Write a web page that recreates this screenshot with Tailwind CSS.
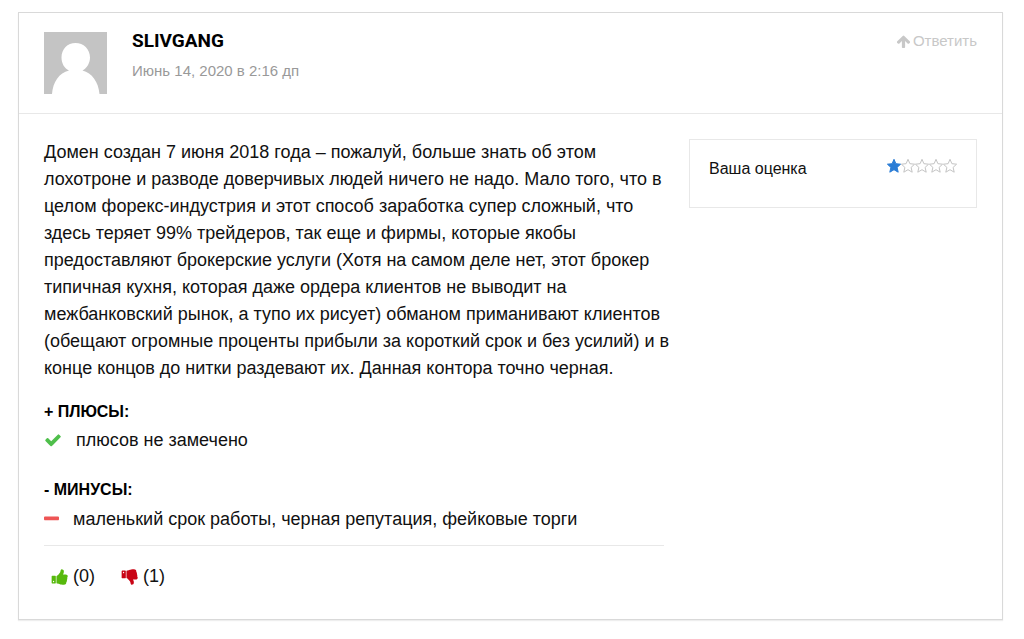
<!DOCTYPE html>
<html lang="ru">
<head>
<meta charset="utf-8">
<meta name="viewport" content="width=device-width, initial-scale=1">
<title>Отзыв SLIVGANG</title>
<script src="https://cdn.jsdelivr.net/npm/@tailwindcss/browser@4"></script>
</head>
<body class="bg-white pt-3 pr-[21px] pb-5 pl-[18px] font-['Liberation_Sans',sans-serif] text-lg leading-[27px] text-[#111]">
<svg class="hidden" aria-hidden="true">
  <symbol id="thumb" viewBox="0 0 1792 1792"><path d="M320 1344q0-26-19-45t-45-19q-27 0-45.5 19t-18.5 45q0 27 18.5 45.5t45.5 18.5q26 0 45-18.5t19-45.5zm160-512v640q0 26-19 45t-45 19h-288q-26 0-45-19t-19-45v-640q0-26 19-45t45-19h288q26 0 45 19t19 45zm1184 0q0 86-55 149 15 44 15 76 3 76-43 137 17 56 0 117-15 57-54 94 9 112-49 181-64 76-197 78h-129q-66 0-144-15.5t-121.5-29-120.5-39.5q-123-43-158-44-26-1-45-19.5t-19-44.5v-641q0-25 18-43.5t43-20.5q24-2 76-59t101-121q68-87 101-120 18-18 31-48t17.5-48.5 13.5-60.5q7-39 12.5-61t19.500-52 34-50q19-19 45-19 46 0 82.500 10.500t60 26 40 40.500 24 45 12 50 5 45 .5 39q0 38-9.500 76t-19 60-27.500 56q-3 6-10 18t-11 22-8 24h277q78 0 135 57t57 135z"/></symbol>
  <symbol id="star" viewBox="0 0 14 14" overflow="visible"><path d="M7 .3 8.900 4.700 13.600 5.200 10.100 8.400 11.200 13.200 7 10.700 2.800 13.200 3.900 8.400 .4 5.200 5.100 4.700Z"/></symbol>
</svg>
<article class="border border-[#d9d9d9] shadow-[0_1px_1px_#eee]">
  <header class="flex items-start border-b border-[#e8e8e8] px-[25px] pt-[19px] pb-[19px]">
    <svg class="h-[62px] w-[63px] shrink-0" viewBox="0 0 63 62" role="img" aria-label="Аватар">
      <rect width="63" height="62" fill="#c4c4c4"/>
      <path d="M8 62C9 50 15 41 25 38.500C20 36 17.500 31 17.500 25.500C17.500 17 23.500 11 31.500 11S46 17 46 25.500C46 31 43 36 38.500 38.500C48 41 54.500 50 55.500 62Z" fill="#fff"/>
    </svg>
    <div class="-mt-px ml-[25px] flex-1">
      <h3 class="font-['Roboto',sans-serif] text-[19px] leading-5 font-bold text-black">SLIVGANG</h3>
      <time class="mt-2 block text-[15px] leading-6 text-[#999]" datetime="2020-06-14T02:16">Июнь 14, 2020 в 2:16 дп</time>
    </div>
    <a href="#reply" class="flex items-center gap-[2px] text-[15px] leading-[18px] text-[#c8c8c8]">
      <svg class="size-[15px]" viewBox="0 0 1792 1792" fill="currentColor" aria-hidden="true"><path d="M1675 971q0 51-37 90l-75 75q-38 38-91 38-54 0-90-38l-294-293v704q0 52-37.500 84.500t-90.500 32.500h-128q-53 0-90.500-32.500t-37.500-84.500v-704l-294 293q-36 38-90 38t-90-38l-75-75q-38-38-38-90 0-53 38-91l651-651q35-37 90-37 54 0 91 37l651 651q37 39 37 91z"/></svg>Ответить</a>
  </header>
  <div class="flex items-start gap-[25px] px-[25px] pt-[25px] pb-[29px]">
    <div class="min-w-0 flex-1">
      <p class="-mr-3">Домен создан 7 июня 2018 года – пожалуй, больше знать об этом лохотроне и разводе доверчивых людей ничего не надо. Мало того, что в целом форекс-индустрия и этот способ заработка супер сложный, что здесь теряет 99% трейдеров, так еще и фирмы, которые якобы предоставляют брокерские услуги (Хотя на самом деле нет, этот брокер типичная кухня, которая даже ордера клиентов не выводит на межбанковский рынок, а тупо их рисует) обманом приманивают клиентов (обещают огромные проценты прибыли за короткий срок и без усилий) и в конце концов до нитки раздевают их. Данная контора точно черная.</p>
      <h4 class="mt-4 text-base leading-7 font-bold text-black">+ ПЛЮСЫ:</h4>
      <div class="flex items-center leading-7">
        <svg class="mr-[14px] size-[18px]" viewBox="0 0 1792 1792" fill="#4fbf4b" aria-hidden="true"><path d="M1671 566q0 40-28 68l-724 724-136 136q-28 28-68 28t-68-28l-136-136-362-362q-28-28-28-68t28-68l136-136q28-28 68-28t68 28l294 295 656-657q28-28 68-28t68 28l136 136q28 28 28 68z"/></svg>плюсов не замечено</div>
      <h4 class="mt-[22px] text-base leading-7 font-bold text-black">- МИНУСЫ:</h4>
      <div class="flex items-center leading-[30px]">
        <svg class="mr-[14px] h-4 w-[15px]" viewBox="192 0 1408 1664" preserveAspectRatio="none" fill="#ee5555" aria-hidden="true"><path d="M1600 672v192q0 40-28 68t-68 28h-1216q-40 0-68-28t-28-68v-192q0-40 28-68t68-28h1216q40 0 68 28t28 68z"/></svg>маленький срок работы, черная репутация, фейковые торги</div>
      <div class="mt-[11px] flex gap-[26px] border-t border-[#e8e8e8] pt-[17px] pl-[7px]">
        <button type="button" aria-label="Нравится (0)" class="flex items-center gap-1"><svg class="size-[18px]" fill="#57b90d" aria-hidden="true"><use href="#thumb"/></svg>(0)</button>
        <button type="button" aria-label="Не нравится (1)" class="flex items-center gap-1"><svg class="size-[18px] -scale-y-100" fill="#c90415" aria-hidden="true"><use href="#thumb"/></svg>(1)</button>
      </div>
    </div>
    <aside class="flex w-[288px] shrink-0 items-start justify-between border border-[#e8e8e8] px-[19px] pt-[18px] pb-[27px] text-base">
      <span class="leading-[22px]">Ваша оценка</span>
      <span class="mt-px flex" role="img" aria-label="1 из 5">
        <svg class="size-[14px] overflow-visible" fill="#2b7dd6" stroke="#2b7dd6"><use href="#star"/></svg>
        <svg class="size-[14px] overflow-visible" fill="none" stroke="#c4c4c4"><use href="#star"/></svg>
        <svg class="size-[14px] overflow-visible" fill="none" stroke="#c4c4c4"><use href="#star"/></svg>
        <svg class="size-[14px] overflow-visible" fill="none" stroke="#c4c4c4"><use href="#star"/></svg>
        <svg class="size-[14px] overflow-visible" fill="none" stroke="#c4c4c4"><use href="#star"/></svg>
      </span>
    </aside>
  </div>
</article>
</body>
</html>
